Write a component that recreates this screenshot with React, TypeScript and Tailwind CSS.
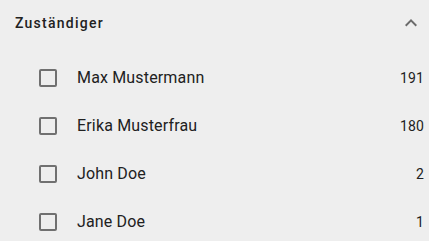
const people = [
  { name: "Max Mustermann", count: 191 },
  { name: "Erika Musterfrau", count: 180 },
  { name: "John Doe", count: 2 },
  { name: "Jane Doe", count: 1 },
];

export default function App() {
  return (
    <div className="w-[429px] h-[241px] overflow-hidden bg-[#eeeeee] text-[#212121] font-['Roboto',sans-serif]">
      <div className="h-[46px] flex items-center justify-between pl-[15px] pr-[6px]">
        <span className="text-sm font-medium tracking-[0.09em]">Zuständiger</span>
        <svg viewBox="0 0 24 24" className="w-6 h-6 fill-[#6b6b6b]">
          <path d="M12 8l-6 6 1.41 1.41L12 10.83l4.59 4.58L18 14z" />
        </svg>
      </div>
      <ul className="pt-[8px]">
        {people.map((p) => (
          <li key={p.name} className="h-[48px] flex items-center pr-[5px]">
            <span className="ml-[39px] w-[18px] h-[18px] border-2 border-[#707070] rounded-[2px] shrink-0" />
            <span className="ml-[20px] text-base leading-6 tracking-[0.01em] flex-1">{p.name}</span>
            <span className="text-sm tracking-[0.01em]">{p.count}</span>
          </li>
        ))}
      </ul>
    </div>
  );
}
